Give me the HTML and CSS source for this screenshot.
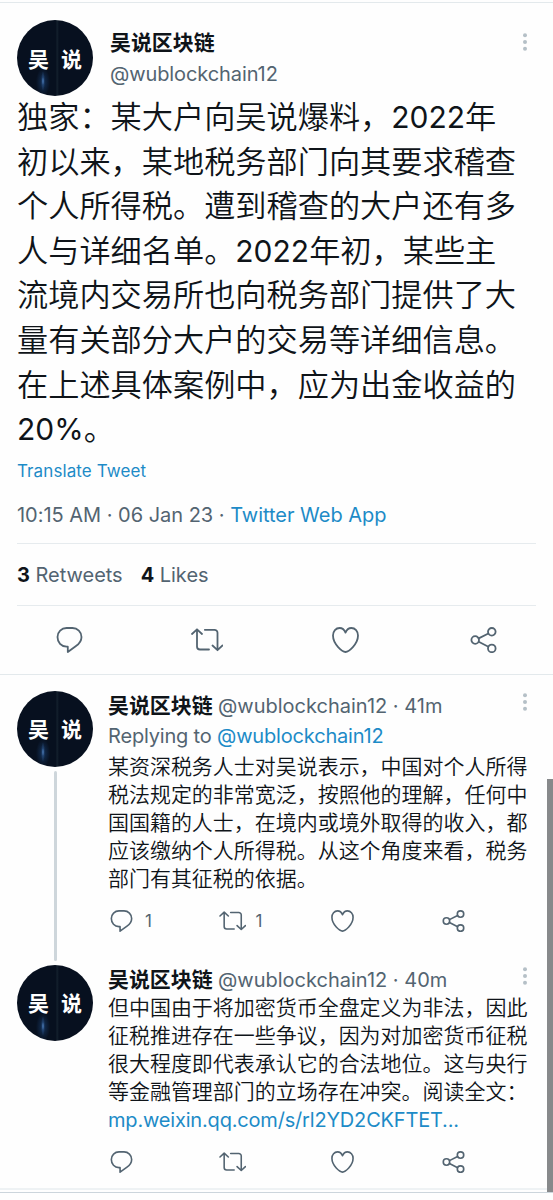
FILE: index.html
```html
<!DOCTYPE html>
<html lang="zh-CN">
<head>
<meta charset="utf-8">
<title>吴说区块链</title>
<link rel="stylesheet" href="styles.css">
</head>
<body>
<svg class="defs" width="0" height="0">
  <symbol id="reply" viewBox="0 0 26 26"><path d="M10 1h6a9 9 0 0 1 9 9c0 4-2 6.600-5.500 9L11.300 25v-5.300H10C4.700 19.500 1 15.500 1 10a9 9 0 0 1 9-9z"/></symbol>
  <symbol id="retweet" viewBox="0 0 32 24"><path d="M1 6l5-4.700L11 6M6 1.500v17a3 3 0 0 0 3 3h9M13.800 1.800h9.700a3 3 0 0 1 3 3v17M21.500 17.500l5 4.700 5-4.700"/></symbol>
  <symbol id="heart" viewBox="0 0 27 26"><path d="M13.500 25C10.500 24.800 1 17.500 1 8.600 1 4.200 3.900 1 7.600 1c2.700 0 4.700 1.600 5.900 4.600C14.700 2.600 16.700 1 19.400 1 23.100 1 26 4.200 26 8.600 26 17.500 16.500 24.800 13.500 25z"/></symbol>
  <symbol id="share" viewBox="0 0 26 26"><circle cx="4.700" cy="13" r="3.800"/><circle cx="21.300" cy="4.800" r="3.800"/><circle cx="21.300" cy="21.400" r="3.800"/><path d="M8.200 11.400l9.700-4.900M8.200 14.700l9.700 5"/></symbol>
  <symbol id="more" viewBox="0 0 4 18"><circle cx="2" cy="2.300" r="2"/><circle cx="2" cy="9" r="2"/><circle cx="2" cy="15.700" r="2"/></symbol>
</svg>

<main class="page">
  <article class="tweet">
    <header class="tweet-head">
      <div class="avatar"><span>吴</span><span>说</span></div>
      <div class="author">
        <div class="name">吴说区块链</div>
        <div class="handle">@wublockchain12</div>
      </div>
      <svg class="more"><use href="#more"/></svg>
    </header>
    <p class="body">
      <span>独家：某大户向吴说爆料，<b class="num">2022</b>年</span>
      <span>初以来，某地税务部门向其要求稽查</span>
      <span>个人所得税。遭到稽查的大户还有多</span>
      <span>人与详细名单。<b class="num">2022</b>年初，某些主</span>
      <span>流境内交易所也向税务部门提供了大</span>
      <span>量有关部分大户的交易等详细信息。</span>
      <span>在上述具体案例中，应为出金收益的</span>
      <span><b class="num">20%</b>。</span>
    </p>
    <a class="translate">Translate Tweet</a>
    <div class="meta">10:15 AM · 06 Jan 23 · <a>Twitter Web App</a></div>
    <div class="stats"><div><b>3</b> Retweets</div><div><b>4</b> Likes</div></div>
  </article>
  <nav class="actions">
    <svg class="square"><use href="#reply"/></svg>
    <svg class="wide"><use href="#retweet"/></svg>
    <svg class="square"><use href="#heart"/></svg>
    <svg class="square"><use href="#share"/></svg>
  </nav>

  <article class="reply first">
    <div class="rail"><div class="avatar"><span>吴</span><span>说</span></div><div class="thread"></div></div>
    <div class="content">
      <div class="byline"><span class="name">吴说区块链</span><span class="handle">@wublockchain12 · 41m</span><svg class="more"><use href="#more"/></svg></div>
      <div class="replying">Replying to <a>@wublockchain12</a></div>
      <p class="text">
        <span>某资深税务人士对吴说表示，中国对个人所得</span>
        <span>税法规定的非常宽泛，按照他的理解，任何中</span>
        <span>国国籍的人士，在境内或境外取得的收入，都</span>
        <span>应该缴纳个人所得税。从这个角度来看，税务</span>
        <span>部门有其征税的依据。</span>
      </p>
      <nav class="small-actions">
        <div><svg class="square"><use href="#reply"/></svg><i>1</i></div>
        <div><svg class="wide"><use href="#retweet"/></svg><i>1</i></div>
        <div><svg class="square"><use href="#heart"/></svg></div>
        <div><svg class="square"><use href="#share"/></svg></div>
      </nav>
    </div>
  </article>

  <article class="reply second">
    <div class="rail"><div class="avatar"><span>吴</span><span>说</span></div></div>
    <div class="content">
      <div class="byline"><span class="name">吴说区块链</span><span class="handle">@wublockchain12 · 40m</span><svg class="more"><use href="#more"/></svg></div>
      <p class="text">
        <span>但中国由于将加密货币全盘定义为非法，因此</span>
        <span>征税推进存在一些争议，因为对加密货币征税</span>
        <span>很大程度即代表承认它的合法地位。这与央行</span>
        <span>等金融管理部门的立场存在冲突。阅读全文：</span>
        <span><a class="link">mp.weixin.qq.com/s/rl2YD2CKFTET...</a></span>
      </p>
      <nav class="small-actions">
        <div><svg class="square"><use href="#reply"/></svg></div>
        <div><svg class="wide"><use href="#retweet"/></svg></div>
        <div><svg class="square"><use href="#heart"/></svg></div>
        <div><svg class="square"><use href="#share"/></svg></div>
      </nav>
    </div>
  </article>
  <div class="bottom"></div>
  <div class="scrollbar"></div>
</main>
</body>
</html>
```
FILE: styles.css
```css
* { box-sizing: border-box; }
body {
  margin: 0;
  background: #fefefe;
  color: #0f1419;
  font-family: Inter, "Noto Sans CJK SC", sans-serif;
  font-size: 20px;
  overflow: hidden;
}
p { margin: 0; }
a { color: #1d8bc7; }
.defs { display: block; height: 0; }
.page { position: relative; height: 1200px; padding-top: 2px; }
svg { flex: none; fill: none; stroke: #536471; stroke-width: 1.8; stroke-linecap: round; stroke-linejoin: round; }
.more { width: 4px; height: 18px; fill: #b5c0c7; stroke: none; }

.avatar {
  flex: none;
  width: 76px;
  height: 76px;
  border-radius: 50%;
  display: flex;
  justify-content: center;
  align-items: center;
  gap: 12px;
  color: #fff;
  font: bold 21px/30px "Noto Sans CJK SC", sans-serif;
  padding-bottom: 1px;
  background:
    radial-gradient(ellipse 2px 10px at 26px 61px, #5b8fce, #2d558a88 45%, transparent),
    radial-gradient(ellipse 7px 14px at 26px 62px, #143158, transparent),
    linear-gradient(90deg, transparent 39px, #15222f 40px, transparent 42px),
    #07101f;
}
.name { font: bold 20.95px/32px "Noto Sans CJK SC", sans-serif; white-space: nowrap; }
.handle { color: #536471; white-space: nowrap; }

.tweet { padding: 0 17px; border-top: 1px solid #e3e9ec; }
.tweet-head { display: flex; height: 90px; padding-top: 17px; }
.author { flex: 1; margin-left: 17px; padding-top: 5px; }
.author .name { line-height: 32px; }
.author .handle { line-height: 34px; letter-spacing: -.1px; }
.tweet-head .more { margin: 13px 9px 0 0; }
.body { height: 358.8px; font: 350 31.2px/44.6px "Noto Sans CJK SC", sans-serif; white-space: nowrap; }
.body span, .text span { display: block; }
.body span { height: 44.6px; }
.num { font-family: Inter, sans-serif; font-weight: 400; font-size: 30px; line-height: 1; }
.translate { display: block; height: 38px; line-height: 38px; font-size: 17px; letter-spacing: .1px; }
.meta { height: 53px; line-height: 50px; color: #536471; white-space: nowrap; letter-spacing: -.02px; }
.stats { display: flex; gap: 18px; height: 63px; line-height: 62px; color: #536471; border: solid #e6ebee; border-width: 1px 0; letter-spacing: -.02px; }
.stats b { color: #0f1419; }
.actions { display: grid; grid-template-columns: repeat(4, 1fr); place-items: center; height: 69px; padding-top: 1px; border-bottom: 1px solid #e3e9ec; }
.actions .square { width: 27px; height: 26px; }
.actions .wide { width: 32px; height: 24px; }

.reply { display: flex; padding-left: 17px; }
.first { height: 290px; padding-top: 16px; }
.second { height: 223px; }
.rail { display: flex; flex-direction: column; align-items: center; width: 76px; }
.thread { width: 3px; height: 190px; margin-top: 4px; border-radius: 2px; background: #ced6db; }
.content { flex: 1; margin-left: 15px; }
.byline { display: flex; height: 30px; line-height: 30px; }
.byline .name { line-height: 27px; width: 110px; }
.byline .more { margin: 2px 26px 0 auto; }
.replying { height: 30px; line-height: 30px; color: #536471; letter-spacing: -.18px; }
.text { font: 350 20.97px/28.15px "Noto Sans CJK SC", sans-serif; white-space: nowrap; }
.text span { height: 28.15px; }
.second .text { margin-top: -3px; }
.link { font-family: Inter, sans-serif; font-size: 20px; font-weight: 400; letter-spacing: -.18px; }
.small-actions { display: grid; grid-template-columns: repeat(4, 110.6px); margin: 17px 0 0 2px; }
.small-actions div { display: flex; align-items: center; height: 24px; color: #536471; }
.small-actions svg { stroke-width: 1.9; }
.small-actions .square { width: 23px; height: 22px; }
.small-actions .wide { width: 27px; height: 20px; margin-left: -2px; }
.small-actions i { font-style: normal; font-size: 17px; margin-left: 12px; }
.small-actions .wide + i { margin-left: 10px; }
.bottom { height: 5px; border-top: 2px solid #eef2f4; border-bottom: 1px solid #ccd5dc; }
.scrollbar { position: absolute; right: 0; top: 779px; width: 6px; height: 413px; background: #87898b; }
```
